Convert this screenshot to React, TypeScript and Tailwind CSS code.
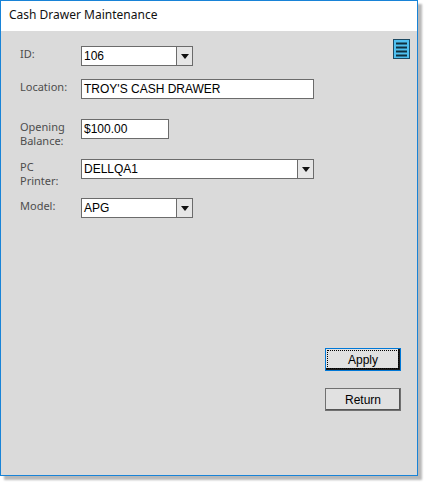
import type { ReactNode } from "react";

const ui = { fontFamily: '"Noto Sans", "Open Sans", sans-serif' };
const field = { fontFamily: '"Liberation Sans", Arial, sans-serif' };

const Arrow = () => (
  <svg width="8" height="5" viewBox="0 0 8 5">
    <polygon points="0,0 8,0 4,5" fill="#111" />
  </svg>
);

const Combo = ({ value, width }: { value: string; width: string }) => (
  <div className={`flex h-[20px] ${width} border border-[#6b6b6b] bg-white`}>
    <div className="flex-1 pl-[2px] text-[12px] leading-[18px] text-black" style={field}>
      {value}
    </div>
    <div className="flex w-[16px] items-center justify-center border-l border-[#6b6b6b] bg-[#e6e6e6]">
      <Arrow />
    </div>
  </div>
);

const TextBox = ({ value, width }: { value: string; width: string }) => (
  <div
    className={`h-[20px] ${width} border border-[#6b6b6b] bg-white pl-[2px] text-[12px] leading-[18px] text-black`}
    style={field}
  >
    {value}
  </div>
);

const Row = ({ label, children, className }: { label: ReactNode; children: ReactNode; className: string }) => (
  <div className={`flex items-start ${className}`}>
    <div className="w-[61px] pt-[1px] text-[11px] leading-[14px] text-[#4d4d4d]" style={ui}>
      {label}
    </div>
    {children}
  </div>
);

export default function App() {
  return (
    <div className="h-[483px] w-[425px] bg-white">
      <div className="relative flex h-[476px] w-[418px] flex-col border border-[#1883d7] bg-[#dadada] shadow-[4px_4px_2px_rgba(0,0,0,0.28)]">
        <div className="h-[30px] bg-white pl-[8px] pt-[6px] text-[12px] leading-[16px] text-[#111]" style={ui}>
          Cash Drawer Maintenance
        </div>
        <div className="relative flex flex-1 flex-col pl-[19px]">
          <svg className="absolute right-[7px] top-[8px]" width="17" height="20" viewBox="0 0 17 20">
            <rect x="0.5" y="0.5" width="16" height="19" fill="#4fc0f0" stroke="#1d4a63" />
            <rect x="3" y="3.5" width="11" height="2" fill="#10303f" />
            <rect x="3" y="7.5" width="11" height="2" fill="#10303f" />
            <rect x="3" y="11.5" width="11" height="2" fill="#10303f" />
            <rect x="3" y="15.5" width="11" height="2" fill="#10303f" />
          </svg>

          <Row label="ID:" className="mt-[15px] h-[20px]">
            <Combo value="106" width="w-[112px]" />
          </Row>
          <Row label="Location:" className="mt-[13px] h-[20px]">
            <TextBox value="TROY'S CASH DRAWER" width="w-[233px]" />
          </Row>
          <Row label={<>Opening<br />Balance:</>} className="mt-[20px] h-[20px]">
            <TextBox value="$100.00" width="w-[88px]" />
          </Row>
          <Row label={<>PC<br />Printer:</>} className="mt-[20px] h-[20px]">
            <Combo value="DELLQA1" width="w-[233px]" />
          </Row>
          <Row label="Model:" className="mt-[19px] h-[20px]">
            <Combo value="APG" width="w-[112px]" />
          </Row>

          <div className="mt-[130px] flex flex-col items-end gap-[17px] pr-[16px]" style={field}>
            <button className="h-[23px] w-[76px] border border-[#0078d7] bg-[#e1e1e1] p-[1px] text-[12px] text-black shadow-[inset_-2px_-2px_0_#1a1a1a]">
              <div className="flex h-full w-full items-center justify-center border border-dotted border-black">
                Apply
              </div>
            </button>
            <button className="h-[23px] w-[76px] border border-[#707070] bg-[#e1e1e1] text-[12px] text-black shadow-[inset_-1px_-1px_0_#555]">
              Return
            </button>
          </div>
        </div>
      </div>
    </div>
  );
}
